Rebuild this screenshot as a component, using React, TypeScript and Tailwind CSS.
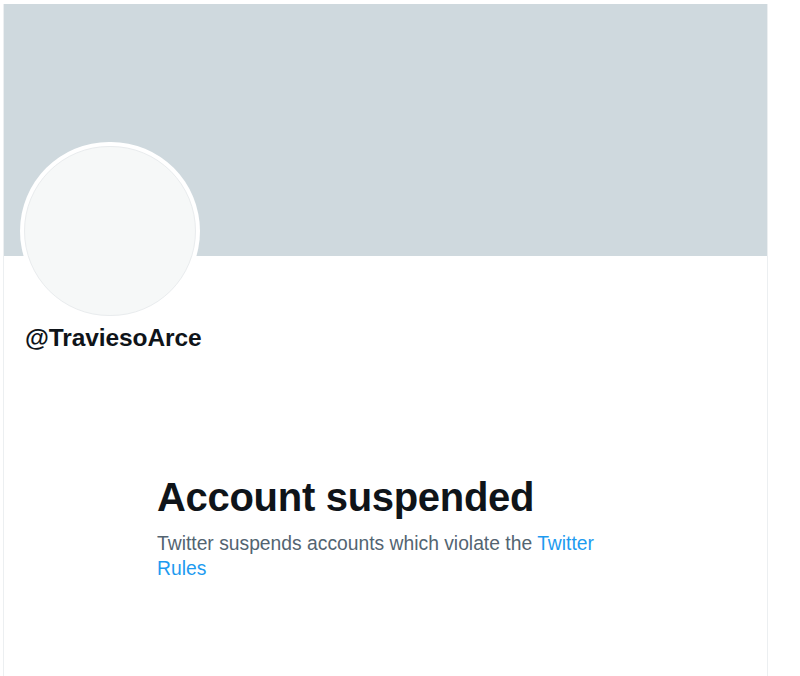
export default function App() {
  return (
    <div className="w-[800px] h-[676px] bg-white pt-[4px] overflow-hidden font-['Liberation_Sans',Arial,sans-serif]">
      <div className="ml-[3px] w-[765px] h-full border-l border-r border-[#eceff1]">
        <div className="h-[252px] bg-[#cfd9de]" />
        <div className="ml-[16px] -mt-[114px] w-[180px] h-[178px] rounded-full bg-white p-[4px]">
          <div className="w-full h-full rounded-full bg-[#f6f8f8] border border-[#e9ecee]" />
        </div>
        <div className="ml-[21px] mt-[3px] text-[24.5px] leading-[30px] font-bold text-[#0f1419] tracking-[-0.1px]">
          @TraviesoArce
        </div>
        <div className="ml-[153px] mt-[120px] w-[450px]">
          <h1 className="text-[40px] leading-[48px] font-extrabold text-[#0f1419] tracking-[-0.3px]">
            Account suspended
          </h1>
          <p className="mt-[10px] text-[19.3px] leading-[25px] text-[#536471]">
            Twitter suspends accounts which violate the{" "}
            <a className="text-[#1d9bf0]">Twitter Rules</a>
          </p>
        </div>
      </div>
    </div>
  );
}
